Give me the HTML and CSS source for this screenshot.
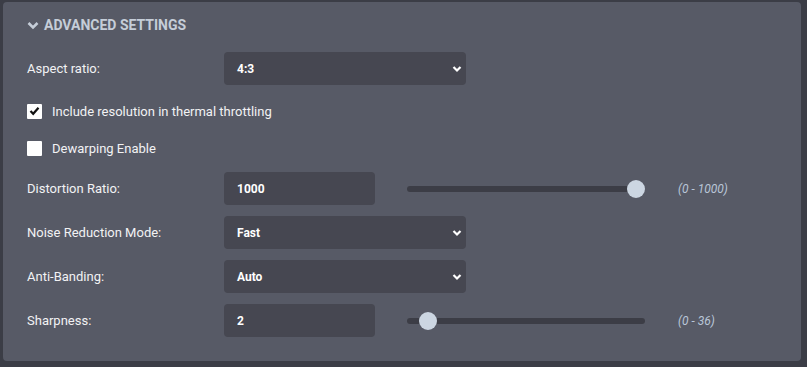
FILE: index.html
```html
<!DOCTYPE html>
<html>
<head>
    <title>Advanced Settings</title>
    <link rel="stylesheet" href="styles.css">
</head>
<body>
    <div class="panel">
        <div class="panel-header">
            <svg class="chevron" width="12" height="9" viewBox="0 0 12 9">
                <path d="M1.5 2 L6 6.5 L10.5 2" fill="none" stroke="#c5cdd8" stroke-width="2.6"/>
            </svg>
            <span>Advanced Settings</span>
        </div>
        <div class="form">
            <div class="row">
                <label class="label">Aspect ratio:</label>
                <div class="select">
                    <span>4:3</span>
                    <svg width="10" height="8" viewBox="0 0 10 8"><path d="M1.5 2 L5 5.5 L8.5 2" fill="none" stroke="#fff" stroke-width="2.2"/></svg>
                </div>
            </div>
            <div class="check-row first">
                <span class="checkbox checked">
                    <svg width="11" height="10" viewBox="0 0 11 10"><path d="M1.5 5 L4.2 7.8 L9.5 1.8" fill="none" stroke="#111" stroke-width="2.2"/></svg>
                </span>
                <span>Include resolution in thermal throttling</span>
            </div>
            <div class="check-row">
                <span class="checkbox"></span>
                <span>Dewarping Enable</span>
            </div>
            <div class="row">
                <label class="label">Distortion Ratio:</label>
                <div class="text-input">1000</div>
                <input class="slider" type="range" min="0" max="1000" value="1000">
                <span class="range-hint">(0 - 1000)</span>
            </div>
            <div class="row">
                <label class="label">Noise Reduction Mode:</label>
                <div class="select">
                    <span>Fast</span>
                    <svg width="10" height="8" viewBox="0 0 10 8"><path d="M1.5 2 L5 5.5 L8.5 2" fill="none" stroke="#fff" stroke-width="2.2"/></svg>
                </div>
            </div>
            <div class="row">
                <label class="label">Anti-Banding:</label>
                <div class="select">
                    <span>Auto</span>
                    <svg width="10" height="8" viewBox="0 0 10 8"><path d="M1.5 2 L5 5.5 L8.5 2" fill="none" stroke="#fff" stroke-width="2.2"/></svg>
                </div>
            </div>
            <div class="row">
                <label class="label">Sharpness:</label>
                <div class="text-input">2</div>
                <input class="slider" type="range" min="0" max="36" value="2">
                <span class="range-hint">(0 - 36)</span>
            </div>
        </div>
    </div>
</body>
</html>
```

FILE: styles.css
```css
body {
    margin: 0;
    padding: 2px 6px 6px 3px;
    background-color: #3b3d46;
    font-family: Roboto, 'Liberation Sans', sans-serif;
    color: #f2f2f4;
}

.panel {
    height: 359px;
    box-sizing: border-box;
    background-color: #575a66;
    border-radius: 4px;
    padding: 14px 24px 0 24px;
}

/* Header */
.panel-header {
    display: flex;
    align-items: center;
    height: 18px;
    color: #c5cdd8;
    font-size: 14px;
    font-weight: 700;
    text-transform: uppercase;
}

.chevron {
    margin-right: 5px;
}

/* Form rows */
.form {
    display: flex;
    flex-direction: column;
    gap: 11px;
    margin-top: 18px;
}

.row {
    display: flex;
    align-items: center;
    height: 33px;
}

.label {
    width: 197px;
    font-size: 13px;
}

.select {
    width: 242px;
    height: 33px;
    box-sizing: border-box;
    display: flex;
    align-items: center;
    justify-content: space-between;
    padding: 0 4px 0 13px;
    background-color: #464751;
    border-radius: 4px;
    font-size: 12px;
    font-weight: 700;
    color: #fff;
}

.text-input {
    width: 151px;
    height: 33px;
    box-sizing: border-box;
    display: flex;
    align-items: center;
    padding-left: 13px;
    background-color: #464751;
    border-radius: 4px;
    font-size: 12px;
    font-weight: 700;
    color: #fff;
}

.check-row {
    display: flex;
    align-items: center;
    height: 26px;
    font-size: 13px;
}

.check-row.first {
    margin-top: 2px;
}

.checkbox {
    width: 15px;
    height: 15px;
    background: #fff;
    border-radius: 1px;
    margin-right: 10px;
    display: flex;
    align-items: center;
    justify-content: center;
}

/* Range slider */
.slider {
    -webkit-appearance: none;
    appearance: none;
    width: 238px;
    height: 18px;
    margin: 0 0 0 32px;
    background: transparent;
}

.slider::-webkit-slider-runnable-track {
    height: 6px;
    background: #3c3d46;
    border-radius: 3px;
}

.slider::-webkit-slider-thumb {
    -webkit-appearance: none;
    width: 18px;
    height: 18px;
    margin-top: -6px;
    border-radius: 50%;
    background: #ccd6e2;
}

.range-hint {
    margin-left: 33px;
    font-size: 12px;
    font-style: italic;
    color: #b9c6d8;
}
```
